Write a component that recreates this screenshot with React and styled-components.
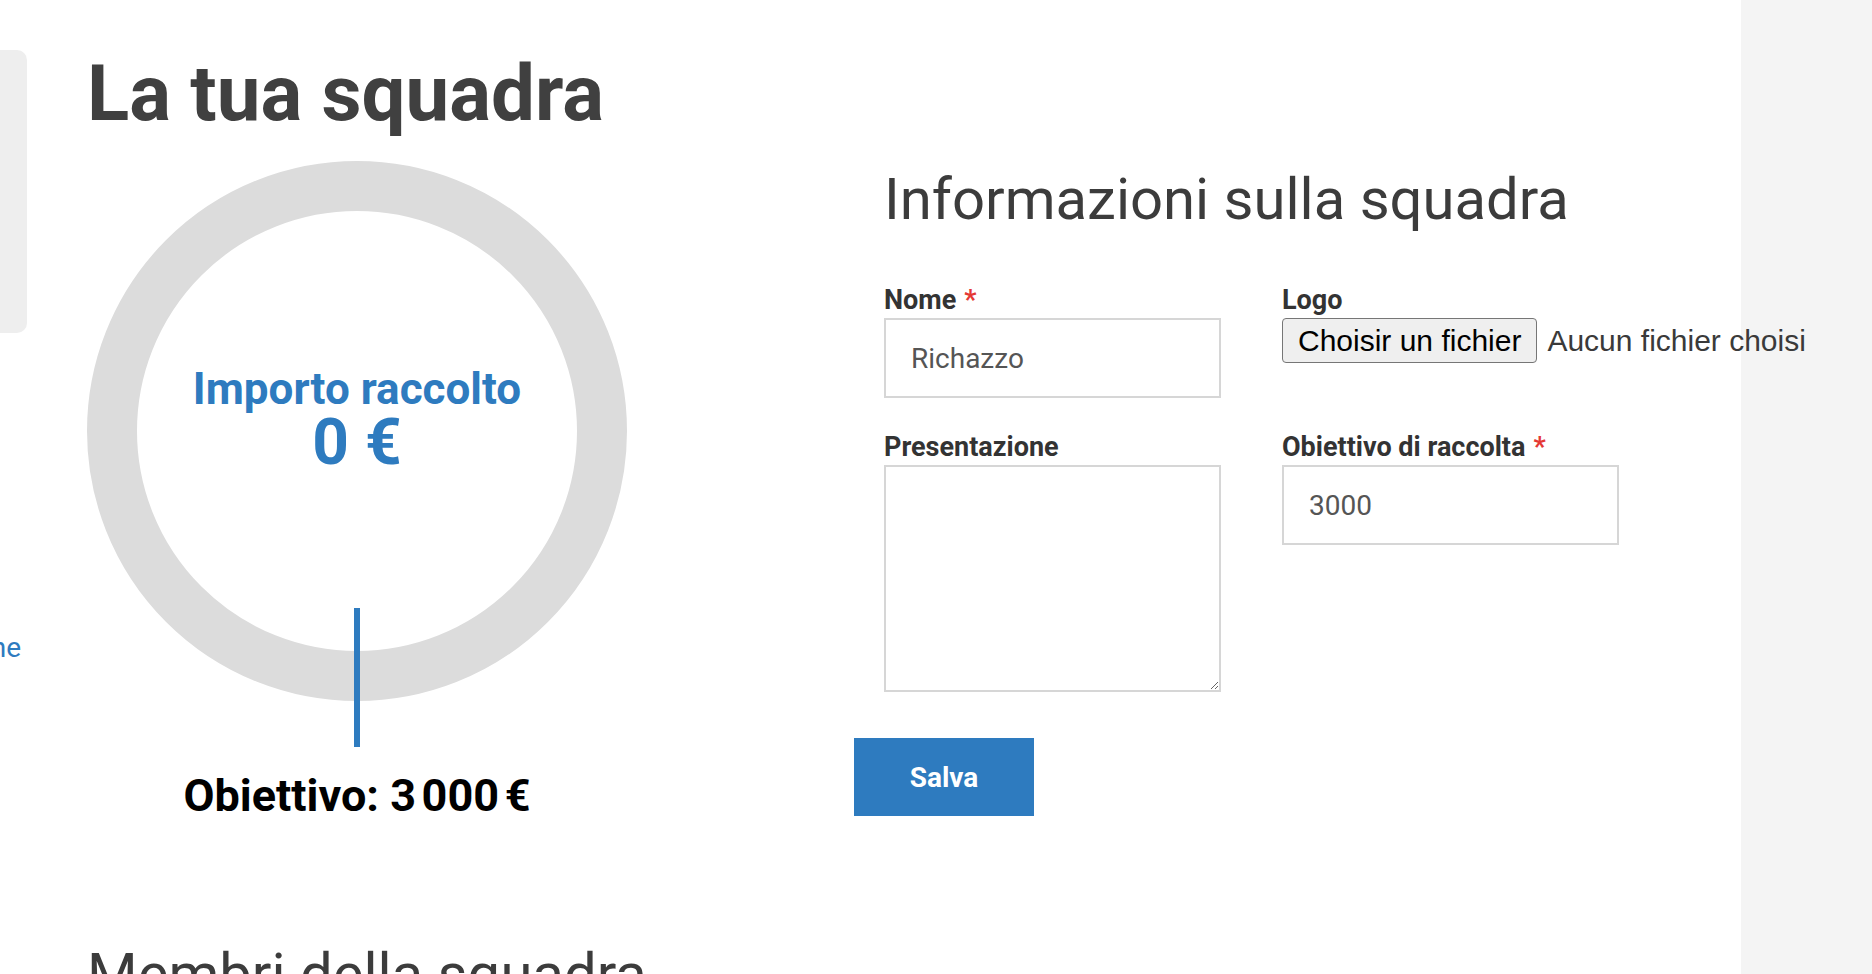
import React from 'react';
import styled, { createGlobalStyle } from 'styled-components';

const GlobalStyle = createGlobalStyle`
  html, body {
    margin: 0;
    padding: 0;
    overflow: hidden;
  }
  body {
    font-family: Roboto, "Liberation Sans", Arial, sans-serif;
    background: #f4f4f4;
  }
  * {
    box-sizing: border-box;
  }
`;

const BLUE = '#2e7bbf';

const Page = styled.div`
  min-height: 974px;
`;

const Main = styled.main`
  width: 1741px;
  min-height: 974px;
  background: #ffffff;
  display: flex;
`;

const Sidebar = styled.aside`
  width: 27px;
  flex-shrink: 0;
  padding-top: 50px;
  display: flex;
  flex-direction: column;
`;

const SidePanel = styled.div`
  height: 283px;
  background: #eeeeee;
  border-radius: 0 10px 10px 0;
`;

const SideLinkWrap = styled.div`
  margin-top: 298px;
  display: flex;
  justify-content: flex-end;
  overflow: hidden;
  padding-right: 6px;
`;

const SideLink = styled.a`
  flex-shrink: 0;
  white-space: nowrap;
  font-size: 28px;
  line-height: 34px;
  color: ${BLUE};
  text-decoration: none;
`;

const Content = styled.div`
  flex: 1;
  padding-left: 60px;
`;

const Title = styled.h1`
  margin: 50px 0 23px;
  font-size: 78px;
  line-height: 88px;
  font-weight: 700;
  color: #404040;
`;

const Row = styled.div`
  display: grid;
  grid-template-columns: 540px 1fr;
  column-gap: 227px;
  align-items: start;
`;

const GoalColumn = styled.section`
  display: flex;
  flex-direction: column;
  align-items: center;
`;

const RingWrap = styled.div`
  position: relative;
  width: 540px;
  height: 540px;
`;

const Ring = styled.div`
  width: 100%;
  height: 100%;
  border-radius: 50%;
  border: 50px solid #dcdcdc;
  display: flex;
  flex-direction: column;
  align-items: center;
  justify-content: center;
  padding-bottom: 21px;
  color: ${BLUE};
  font-weight: 700;
`;

const RingLabel = styled.div`
  font-size: 44px;
  line-height: 44px;
`;

const RingValue = styled.div`
  font-size: 64px;
  line-height: 64px;
`;

const Marker = styled.div`
  position: absolute;
  top: 447px;
  left: calc(50% - 3px);
  width: 6px;
  height: 139px;
  background: ${BLUE};
`;

const GoalText = styled.div`
  margin-top: 72px;
  font-size: 45px;
  line-height: 46px;
  font-weight: 700;
  color: #000000;
`;

const InfoColumn = styled.section`
  display: flex;
  flex-direction: column;
  align-items: flex-start;
`;

const SectionHeading = styled.h2`
  margin: 3px 0 0 30px;
  font-size: 58px;
  line-height: 70px;
  font-weight: 400;
  color: #3c3c3c;
`;

const FormGrid = styled.div`
  margin: 50px 0 0 30px;
  display: grid;
  grid-template-columns: 337px 337px;
  column-gap: 61px;
  row-gap: 33px;
  align-items: start;
`;

const Field = styled.div`
  display: flex;
  flex-direction: column;
`;

const Label = styled.label`
  font-size: 27px;
  line-height: 32px;
  font-weight: 700;
  color: #333333;
  margin-bottom: 2px;
`;

const Required = styled.span`
  color: #e53935;
  margin-left: 8px;
`;

const TextInput = styled.input`
  height: 80px;
  width: 100%;
  border: 2px solid #d6d6d6;
  padding: 0 25px;
  font-family: Roboto, sans-serif;
  font-size: 28px;
  color: #555555;
  outline: none;
`;

const TextArea = styled.textarea`
  height: 227px;
  width: 100%;
  border: 2px solid #d6d6d6;
  padding: 20px 25px;
  font-family: Roboto, sans-serif;
  font-size: 28px;
  color: #555555;
  outline: none;
`;

const FileRow = styled.div`
  display: flex;
  align-items: center;
  white-space: nowrap;
  font-family: "Liberation Sans", Arial, sans-serif;
  font-size: 30px;
`;

const FileButton = styled.label`
  height: 45px;
  display: flex;
  align-items: center;
  padding: 0 15px;
  background: #efefef;
  border: 1px solid #767676;
  border-radius: 4px;
  color: #000000;
`;

const FileStatus = styled.span`
  margin-left: 10px;
  color: #3a3a3a;
`;

const SaveButton = styled.button`
  margin-top: 46px;
  width: 180px;
  height: 78px;
  border: none;
  background: ${BLUE};
  color: #ffffff;
  font-family: Roboto, sans-serif;
  font-size: 28px;
  font-weight: 700;
`;

const MembersHeading = styled.h2`
  margin: 120px 0 0;
  font-size: 58px;
  line-height: 70px;
  font-weight: 400;
  color: #3c3c3c;
`;

const goal = new Intl.NumberFormat('fr-FR').format(3000);

export default function App() {
  return (
    <Page>
      <GlobalStyle />
      <Main>
        <Sidebar>
          <SidePanel />
          <SideLinkWrap>
            <SideLink href="#">Donazione</SideLink>
          </SideLinkWrap>
        </Sidebar>
        <Content>
          <Title>La tua squadra</Title>
          <Row>
            <GoalColumn>
              <RingWrap>
                <Ring>
                  <RingLabel>Importo raccolto</RingLabel>
                  <RingValue>0 €</RingValue>
                </Ring>
                <Marker />
              </RingWrap>
              <GoalText>Obiettivo: {goal}&#8239;€</GoalText>
            </GoalColumn>
            <InfoColumn>
              <SectionHeading>Informazioni sulla squadra</SectionHeading>
              <FormGrid>
                <Field>
                  <Label>Nome<Required>*</Required></Label>
                  <TextInput defaultValue="Richazzo" />
                </Field>
                <Field>
                  <Label>Logo</Label>
                  <FileRow>
                    <FileButton>Choisir un fichier</FileButton>
                    <FileStatus>Aucun fichier choisi</FileStatus>
                  </FileRow>
                </Field>
                <Field>
                  <Label>Presentazione</Label>
                  <TextArea />
                </Field>
                <Field>
                  <Label>Obiettivo di raccolta<Required>*</Required></Label>
                  <TextInput defaultValue="3000" />
                </Field>
              </FormGrid>
              <SaveButton>Salva</SaveButton>
            </InfoColumn>
          </Row>
          <MembersHeading>Membri della squadra</MembersHeading>
        </Content>
      </Main>
    </Page>
  );
}
